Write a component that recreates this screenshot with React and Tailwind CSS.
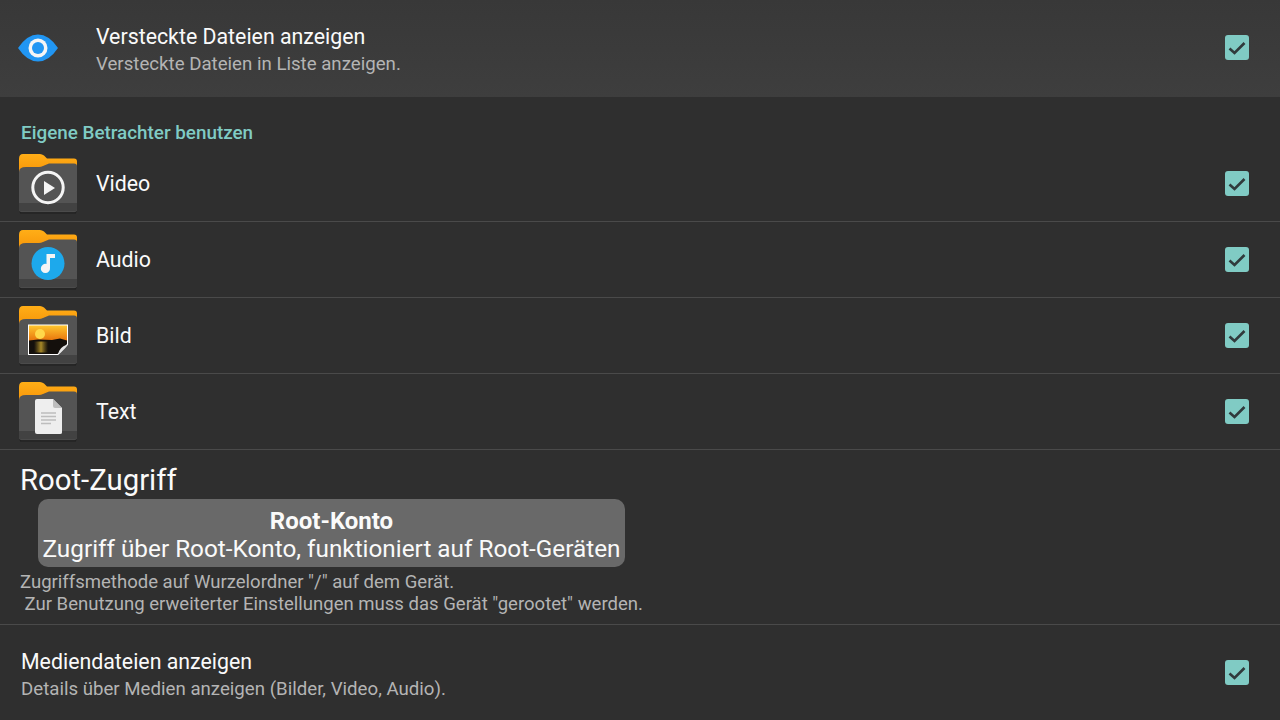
import React from "react";

function Check({ className = "" }) {
  return (
    <div className={"w-6 h-[25px] rounded-[3px] bg-[#80cbc4] flex items-center justify-center shrink-0 " + className}>
      <svg width="24" height="24" viewBox="0 0 24 24" fill="none">
        <path d="M4.5 12.5 L9.5 17 L19.5 7" stroke="#303a3c" strokeWidth="2.6" />
      </svg>
    </div>
  );
}

function Folder({ id, children }) {
  const grad = "folder-" + id;
  return (
    <svg width="60" height="62" viewBox="0 0 60 62" className="shrink-0">
      <defs>
        <linearGradient id={grad} x1="0" y1="0" x2="0" y2="1">
          <stop offset="0" stopColor="#ffae17" />
          <stop offset="1" stopColor="#f79408" />
        </linearGradient>
      </defs>
      <path d="M1 7 Q1 2 5 2 H22 Q24 2 26 3.5 L29 6.5 H56 Q59 6.5 59 9.5 V22 H1 Z" fill={"url(#" + grad + ")"} />
      <path d="M1 23 V57 Q1 60 4 60 H56 Q59 60 59 57 V14 Q59 11.5 56 11.5 H31 L25 14 Q23 15 21 15 H8 Q1 15 1 20 Z" fill="#545454" />
      <path d="M1 51 H59 V57 Q59 59.5 56 59.5 H4 Q1 59.5 1 57 Z" fill="#424242" />
      <path d="M1.5 59 Q2 60.5 4 60.5 H56 Q58 60.5 58.5 59 L58 61.5 H2 Z" fill="#1f1f1f" />
      {children}
    </svg>
  );
}

const icons = {
  video: (
    <g>
      <circle cx="30" cy="35.5" r="15.2" fill="none" stroke="#f5f5f5" strokeWidth="3" />
      <path d="M26 29 L37 36 L26 43 Z" fill="#f5f5f5" />
    </g>
  ),
  audio: (
    <g>
      <circle cx="30" cy="35.5" r="16.5" fill="#1da9ec" />
      <path d="M28.5 26 H37 V30 H32 V40 A4.6 4.6 0 1 1 28.5 36 Z" fill="#f5f5f5" />
    </g>
  ),
  bild: (
    <g>
      <defs>
        <linearGradient id="sky" x1="0" y1="0" x2="0" y2="1">
          <stop offset="0" stopColor="#ffc62e" />
          <stop offset="1" stopColor="#e8720c" />
        </linearGradient>
        <linearGradient id="glow" x1="0" y1="0" x2="1" y2="0">
          <stop offset="0" stopColor="#8f7420" stopOpacity="0" />
          <stop offset="0.5" stopColor="#a88a28" />
          <stop offset="1" stopColor="#8f7420" stopOpacity="0" />
        </linearGradient>
      </defs>
      <path d="M10 20.5 H50 V40.5 L40 51 H10 Z" fill="#ffffff" />
      <path d="M11 21.5 H49 V37 H11 Z" fill="url(#sky)" />
      <circle cx="22" cy="30" r="5" fill="#ffd84a" />
      <path d="M11 36.5 L20 35.5 L34 36 L42 34.5 L49 36.5 V40 L39.5 50 H11 Z" fill="#14100c" />
      <rect x="16" y="37.5" width="14" height="11" fill="url(#glow)" />
      <path d="M40 51 Q40.5 43 50 40.5 Q47 45 40 51 Z" fill="#e4e4e4" />
    </g>
  ),
  text: (
    <g>
      <path d="M17 21 Q17 19 19 19 H35 L44 28 V52.5 Q44 54 42 54 H19 Q17 54 17 52 Z" fill="#eeeeee" />
      <path d="M35 19 L44 28 H37 Q35 28 35 26 Z" fill="#bdbdbd" />
      <path d="M23 33 H38 M23 36.5 H38 M23 40 H38 M23 43.5 H33" stroke="#bdbdbd" strokeWidth="1.3" />
    </g>
  ),
};

function ViewerRow({ label, icon }) {
  return (
    <div className="h-[76px] flex items-center pl-[18px] pr-[31px] border-b border-[#4a4a4a]">
      <div className="w-[78px] -mt-[2px] shrink-0">
        <Folder id={icon}>{icons[icon]}</Folder>
      </div>
      <span className="flex-1 text-[21.33px] mt-[1px] text-[#fafafa]">{label}</span>
      <Check />
    </div>
  );
}

export default function App() {
  return (
    <div className="w-[1280px] h-[720px] overflow-hidden bg-[#2f2f2f] font-['Roboto',sans-serif]">
      <div className="h-[97px] bg-gradient-to-b from-[#383838] to-[#3e3e3e] flex items-center pl-[18px] pr-[31px]">
        <div className="w-[78px] shrink-0 -mt-[1px]">
          <svg width="40" height="28" viewBox="0 0 40 28">
            <path d="M0 14 Q9 0.5 20 0.5 Q31 0.5 40 14 Q31 27.5 20 27.5 Q9 27.5 0 14 Z" fill="#2196f3" />
            <circle cx="20" cy="14" r="9.5" fill="#f5f5f5" />
            <circle cx="20" cy="14" r="6" fill="#2196f3" />
          </svg>
        </div>
        <div className="flex-1 flex flex-col mt-[3px]">
          <span className="text-[21.33px] leading-[28px] text-[#fafafa]">Versteckte Dateien anzeigen</span>
          <span className="text-[18.67px] leading-[26px] text-[#b4b4b4]">Versteckte Dateien in Liste anzeigen.</span>
        </div>
        <Check className="-mt-[2px]" />
      </div>

      <div className="h-[49px] pl-[21px] pt-[25px]">
        <span className="block text-[18.85px] leading-[22px] font-medium text-[#80cbc4]">Eigene Betrachter benutzen</span>
      </div>

      <ViewerRow label="Video" icon="video" />
      <ViewerRow label="Audio" icon="audio" />
      <ViewerRow label="Bild" icon="bild" />
      <ViewerRow label="Text" icon="text" />

      <div className="pl-[20px] h-[175px] border-b border-[#4a4a4a]">
        <div className="text-[29.33px] leading-[36px] pt-[12px] h-[49px] text-[#fafafa]">Root-Zugriff</div>
        <div className="ml-[18px] w-[587px] h-[68px] rounded-[10px] bg-[#696969] flex flex-col items-center justify-center pt-[4px] text-[#fafafa]">
          <span className="text-[24px] leading-[28px] font-bold">Root-Konto</span>
          <span className="text-[24.3px] leading-[28px] whitespace-nowrap">Zugriff über Root-Konto, funktioniert auf Root-Geräten</span>
        </div>
        <div className="text-[18.55px] leading-[22px] mt-[4px] text-[#b4b4b4] whitespace-pre">
          {'Zugriffsmethode auf Wurzelordner "/" auf dem Gerät.\n Zur Benutzung erweiterter Einstellungen muss das Gerät "gerootet" werden.'}
        </div>
      </div>

      <div className="h-[95px] flex items-center pl-[21px] pr-[31px]">
        <div className="flex-1 flex flex-col mt-[5px]">
          <span className="text-[21.33px] leading-[28px] text-[#fafafa]">Mediendateien anzeigen</span>
          <span className="text-[18.67px] leading-[26px] text-[#b4b4b4]">Details über Medien anzeigen (Bilder, Video, Audio).</span>
        </div>
        <Check />
      </div>
    </div>
  );
}
